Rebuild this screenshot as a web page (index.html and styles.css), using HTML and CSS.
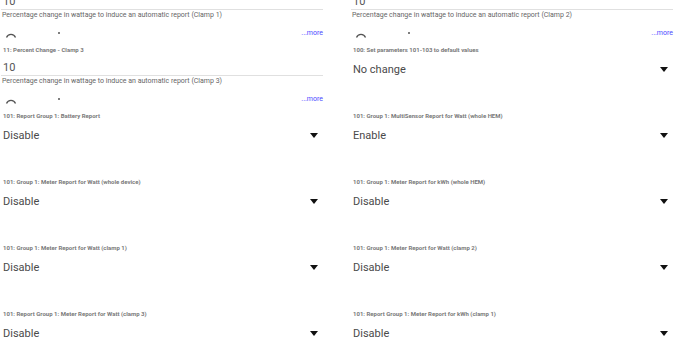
FILE: index.html
```html
<!DOCTYPE html>
<html lang="en">
<head>
    <meta charset="UTF-8">
    <meta name="viewport" content="width=device-width, initial-scale=1.0">
    <title>Device Preferences</title>
    <link rel="stylesheet" href="styles.css">
</head>
<body>
    <div class="settings">
        <!-- Row 1: percent change clamps 1 / 2 -->
        <div class="field">
            <label class="field-label">10: Percent Change - Clamp 1</label>
            <div class="field-input">10</div>
            <p class="field-help">Percentage change in wattage to induce an automatic report (Clamp 1)</p>
            <div class="field-more">
                <svg class="spinner" width="12" height="6" viewBox="0 0 12 6"><path d="M1.5 5.5 A4.8 4.8 0 0 1 10.5 5.5" fill="none" stroke="#555" stroke-width="1.3"/></svg>
                <span class="dot"></span>
                <a href="#" class="more-link">...more</a>
            </div>
        </div>
        <div class="field">
            <label class="field-label">11: Percent Change - Clamp 2</label>
            <div class="field-input">10</div>
            <p class="field-help">Percentage change in wattage to induce an automatic report (Clamp 2)</p>
            <div class="field-more">
                <svg class="spinner" width="12" height="6" viewBox="0 0 12 6"><path d="M1.5 5.5 A4.8 4.8 0 0 1 10.5 5.5" fill="none" stroke="#555" stroke-width="1.3"/></svg>
                <span class="dot"></span>
                <a href="#" class="more-link">...more</a>
            </div>
        </div>

        <!-- Row 2 -->
        <div class="field">
            <label class="field-label">11: Percent Change - Clamp 3</label>
            <div class="field-input">10</div>
            <p class="field-help">Percentage change in wattage to induce an automatic report (Clamp 3)</p>
            <div class="field-more">
                <svg class="spinner" width="12" height="6" viewBox="0 0 12 6"><path d="M1.5 5.5 A4.8 4.8 0 0 1 10.5 5.5" fill="none" stroke="#555" stroke-width="1.3"/></svg>
                <span class="dot"></span>
                <a href="#" class="more-link">...more</a>
            </div>
        </div>
        <div class="field">
            <label class="field-label">100: Set parameters 101-103 to default values</label>
            <div class="field-select"><span>No change</span><span class="caret"></span></div>
        </div>

        <!-- Report group selects -->
        <div class="field">
            <label class="field-label">101: Report Group 1: Battery Report</label>
            <div class="field-select"><span>Disable</span><span class="caret"></span></div>
        </div>
        <div class="field">
            <label class="field-label">101: Group 1: MultiSensor Report for Watt (whole HEM)</label>
            <div class="field-select"><span>Enable</span><span class="caret"></span></div>
        </div>

        <div class="field">
            <label class="field-label">101: Group 1: Meter Report for Watt (whole device)</label>
            <div class="field-select"><span>Disable</span><span class="caret"></span></div>
        </div>
        <div class="field">
            <label class="field-label">101: Group 1: Meter Report for kWh (whole HEM)</label>
            <div class="field-select"><span>Disable</span><span class="caret"></span></div>
        </div>

        <div class="field">
            <label class="field-label">101: Group 1: Meter Report for Watt (clamp 1)</label>
            <div class="field-select"><span>Disable</span><span class="caret"></span></div>
        </div>
        <div class="field">
            <label class="field-label">101: Group 1: Meter Report for Watt (clamp 2)</label>
            <div class="field-select"><span>Disable</span><span class="caret"></span></div>
        </div>

        <div class="field">
            <label class="field-label">101: Report Group 1: Meter Report for Watt (clamp 3)</label>
            <div class="field-select"><span>Disable</span><span class="caret"></span></div>
        </div>
        <div class="field">
            <label class="field-label">101: Report Group 1: Meter Report for kWh (clamp 1)</label>
            <div class="field-select"><span>Disable</span><span class="caret"></span></div>
        </div>
    </div>
</body>
</html>
```

FILE: styles.css
```css
body {
    margin: 0;
    padding: 0;
    background: #fff;
    font-family: Roboto, "Liberation Sans", sans-serif;
    overflow: hidden;
}
.settings {
    display: grid;
    grid-template-columns: 322px 322px;
    grid-auto-rows: 66px;
    column-gap: 28px;
    margin-top: -21px;
    padding-left: 1px;
}
.field {
    display: flex;
    flex-direction: column;
}
.field-label {
    display: block;
    height: 10px;
    line-height: 10px;
    padding-left: 2px;
    font-size: 6px;
    font-weight: 700;
    color: #7a7a7a;
    white-space: nowrap;
}
.field-input {
    margin-top: 5px;
    height: 15px;
    line-height: 15px;
    padding-left: 2px;
    font-size: 11px;
    color: #555;
    border-bottom: 1px solid #e0e0e0;
}
.field-help {
    margin: 1px 0 0;
    padding-left: 1px;
    height: 9px;
    line-height: 9px;
    font-size: 7px;
    color: #666;
    white-space: nowrap;
}
.field-more {
    display: flex;
    align-items: center;
    margin-top: 7px;
    height: 12px;
}
.spinner {
    margin-left: 4px;
    margin-top: 3px;
}
.dot {
    width: 2px;
    height: 2px;
    margin-left: 41px;
    margin-bottom: 1px;
    background: #555;
    border-radius: 1px;
}
.more-link {
    margin-left: auto;
    font-size: 7px;
    color: #4a4aff;
    text-decoration: none;
}
.field-select {
    display: flex;
    align-items: center;
    justify-content: space-between;
    margin-top: 4px;
    height: 20px;
    padding: 0 5px 0 2px;
    font-size: 11px;
    color: #4a4a4a;
}
.caret {
    width: 0;
    height: 0;
    border-left: 4px solid transparent;
    border-right: 4px solid transparent;
    border-top: 5px solid #111;
}
```
